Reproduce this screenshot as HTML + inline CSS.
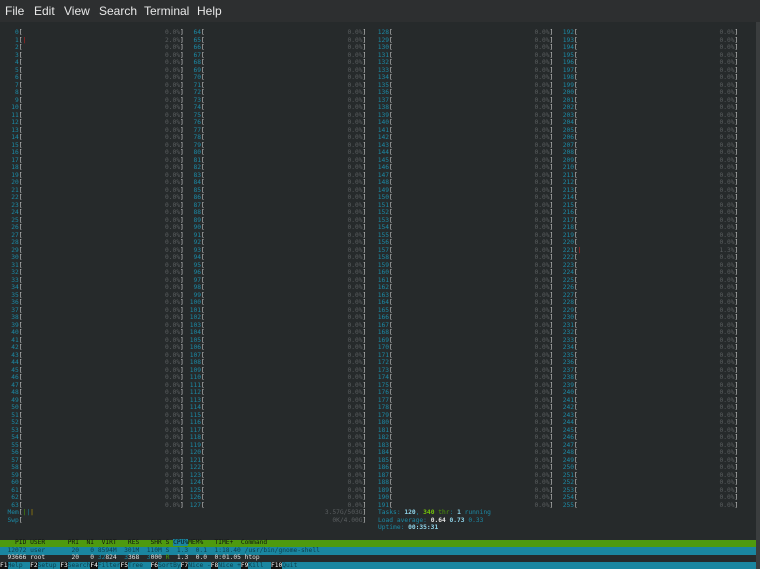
<!DOCTYPE html>
<html style="overflow:hidden;height:569px"><head><meta charset="utf-8"><style>
body{margin:0;width:760px;height:569px;overflow:hidden;background:#262a2b;font-family:"Liberation Mono",monospace;position:relative}
#menu{position:absolute;left:0;top:0;width:760px;height:22px;background:#2d2f30;font-family:"Liberation Sans",sans-serif;font-size:12px;color:#e8e8e8}
#menu span{position:absolute;top:4px}
.p{position:absolute;white-space:pre;font-size:6.25px;line-height:7.5px;margin:0}
.lab{color:#1b8aa6;text-align:right}
.br{color:#d0d0d0}
.pc{color:#5a5e60;text-align:right}
#sb{position:absolute;left:756px;top:22px;width:4px;height:547px;background:#3a3d3e}
.bar{position:absolute;left:0;width:756px;height:7.5px}
</style></head><body>
<div id="menu"><span style="left:5px">File</span><span style="left:34px">Edit</span><span style="left:64px">View</span><span style="left:99px">Search</span><span style="left:144px">Terminal</span><span style="left:197px">Help</span></div>
<div id="sb"></div>

<pre class="p lab" style="left:0;top:29px;width:18.75px">0
1
2
3
4
5
6
7
8
9
10
11
12
13
14
15
16
17
18
19
20
21
22
23
24
25
26
27
28
29
30
31
32
33
34
35
36
37
38
39
40
41
42
43
44
45
46
47
48
49
50
51
52
53
54
55
56
57
58
59
60
61
62
63</pre>
<pre class="p lab" style="left:180px;top:29px;width:21px">64
65
66
67
68
69
70
71
72
73
74
75
76
77
78
79
80
81
82
83
84
85
86
87
88
89
90
91
92
93
94
95
96
97
98
99
100
101
102
103
104
105
106
107
108
109
110
111
112
113
114
115
116
117
118
119
120
121
122
123
124
125
126
127</pre>
<pre class="p lab" style="left:360px;top:29px;width:29px">128
129
130
131
132
133
134
135
136
137
138
139
140
141
142
143
144
145
146
147
148
149
150
151
152
153
154
155
156
157
158
159
160
161
162
163
164
165
166
167
168
169
170
171
172
173
174
175
176
177
178
179
180
181
182
183
184
185
186
187
188
189
190
191</pre>
<pre class="p lab" style="left:545px;top:29px;width:29px">192
193
194
195
196
197
198
199
200
201
202
203
204
205
206
207
208
209
210
211
212
213
214
215
216
217
218
219
220
221
222
223
224
225
226
227
228
229
230
231
232
233
234
235
236
237
238
239
240
241
242
243
244
245
246
247
248
249
250
251
252
253
254
255</pre>

<pre class="p br" style="left:18.75px;top:29px">[
[<span style="color:#cc2020">|</span>
[
[
[
[
[
[
[
[
[
[
[
[
[
[
[
[
[
[
[
[
[
[
[
[
[
[
[
[
[
[
[
[
[
[
[
[
[
[
[
[
[
[
[
[
[
[
[
[
[
[
[
[
[
[
[
[
[
[
[
[
[
[</pre>
<pre class="p br" style="left:201px;top:29px">[
[
[
[
[
[
[
[
[
[
[
[
[
[
[
[
[
[
[
[
[
[
[
[
[
[
[
[
[
[
[
[
[
[
[
[
[
[
[
[
[
[
[
[
[
[
[
[
[
[
[
[
[
[
[
[
[
[
[
[
[
[
[
[</pre>
<pre class="p br" style="left:389px;top:29px">[
[
[
[
[
[
[
[
[
[
[
[
[
[
[
[
[
[
[
[
[
[
[
[
[
[
[
[
[
[
[
[
[
[
[
[
[
[
[
[
[
[
[
[
[
[
[
[
[
[
[
[
[
[
[
[
[
[
[
[
[
[
[
[</pre>
<pre class="p br" style="left:574px;top:29px">[
[
[
[
[
[
[
[
[
[
[
[
[
[
[
[
[
[
[
[
[
[
[
[
[
[
[
[
[
[<span style="color:#cc2020">|</span>
[
[
[
[
[
[
[
[
[
[
[
[
[
[
[
[
[
[
[
[
[
[
[
[
[
[
[
[
[
[
[
[
[
[</pre>

<pre class="p pc" style="left:140px;top:29px;width:40px">0.0%
2.0%
0.0%
0.0%
0.0%
0.0%
0.0%
0.0%
0.0%
0.0%
0.0%
0.0%
0.0%
0.0%
0.0%
0.0%
0.0%
0.0%
0.0%
0.0%
0.0%
0.0%
0.0%
0.0%
0.0%
0.0%
0.0%
0.0%
0.0%
0.0%
0.0%
0.0%
0.0%
0.0%
0.0%
0.0%
0.0%
0.0%
0.0%
0.0%
0.0%
0.0%
0.0%
0.0%
0.0%
0.0%
0.0%
0.0%
0.0%
0.0%
0.0%
0.0%
0.0%
0.0%
0.0%
0.0%
0.0%
0.0%
0.0%
0.0%
0.0%
0.0%
0.0%
0.0%</pre>
<pre class="p pc" style="left:322.5px;top:29px;width:40px">0.0%
0.0%
0.0%
0.0%
0.0%
0.0%
0.0%
0.0%
0.0%
0.0%
0.0%
0.0%
0.0%
0.0%
0.0%
0.0%
0.0%
0.0%
0.0%
0.0%
0.0%
0.0%
0.0%
0.0%
0.0%
0.0%
0.0%
0.0%
0.0%
0.0%
0.0%
0.0%
0.0%
0.0%
0.0%
0.0%
0.0%
0.0%
0.0%
0.0%
0.0%
0.0%
0.0%
0.0%
0.0%
0.0%
0.0%
0.0%
0.0%
0.0%
0.0%
0.0%
0.0%
0.0%
0.0%
0.0%
0.0%
0.0%
0.0%
0.0%
0.0%
0.0%
0.0%
0.0%
3.57G/503G
0K/4.00G</pre>
<pre class="p pc" style="left:509.5px;top:29px;width:40px">0.0%
0.0%
0.0%
0.0%
0.0%
0.0%
0.0%
0.0%
0.0%
0.0%
0.0%
0.0%
0.0%
0.0%
0.0%
0.0%
0.0%
0.0%
0.0%
0.0%
0.0%
0.0%
0.0%
0.0%
0.0%
0.0%
0.0%
0.0%
0.0%
0.0%
0.0%
0.0%
0.0%
0.0%
0.0%
0.0%
0.0%
0.0%
0.0%
0.0%
0.0%
0.0%
0.0%
0.0%
0.0%
0.0%
0.0%
0.0%
0.0%
0.0%
0.0%
0.0%
0.0%
0.0%
0.0%
0.0%
0.0%
0.0%
0.0%
0.0%
0.0%
0.0%
0.0%
0.0%</pre>
<pre class="p pc" style="left:694.5px;top:29px;width:40px">0.0%
0.0%
0.0%
0.0%
0.0%
0.0%
0.0%
0.0%
0.0%
0.0%
0.0%
0.0%
0.0%
0.0%
0.0%
0.0%
0.0%
0.0%
0.0%
0.0%
0.0%
0.0%
0.0%
0.0%
0.0%
0.0%
0.0%
0.0%
0.0%
1.3%
0.0%
0.0%
0.0%
0.0%
0.0%
0.0%
0.0%
0.0%
0.0%
0.0%
0.0%
0.0%
0.0%
0.0%
0.0%
0.0%
0.0%
0.0%
0.0%
0.0%
0.0%
0.0%
0.0%
0.0%
0.0%
0.0%
0.0%
0.0%
0.0%
0.0%
0.0%
0.0%
0.0%
0.0%</pre>
<pre class="p br" style="left:180px;top:29px">]
]
]
]
]
]
]
]
]
]
]
]
]
]
]
]
]
]
]
]
]
]
]
]
]
]
]
]
]
]
]
]
]
]
]
]
]
]
]
]
]
]
]
]
]
]
]
]
]
]
]
]
]
]
]
]
]
]
]
]
]
]
]
]</pre>
<pre class="p br" style="left:362.5px;top:29px">]
]
]
]
]
]
]
]
]
]
]
]
]
]
]
]
]
]
]
]
]
]
]
]
]
]
]
]
]
]
]
]
]
]
]
]
]
]
]
]
]
]
]
]
]
]
]
]
]
]
]
]
]
]
]
]
]
]
]
]
]
]
]
]
]
]</pre>
<pre class="p br" style="left:549.5px;top:29px">]
]
]
]
]
]
]
]
]
]
]
]
]
]
]
]
]
]
]
]
]
]
]
]
]
]
]
]
]
]
]
]
]
]
]
]
]
]
]
]
]
]
]
]
]
]
]
]
]
]
]
]
]
]
]
]
]
]
]
]
]
]
]
]</pre>
<pre class="p br" style="left:734.5px;top:29px">]
]
]
]
]
]
]
]
]
]
]
]
]
]
]
]
]
]
]
]
]
]
]
]
]
]
]
]
]
]
]
]
]
]
]
]
]
]
]
]
]
]
]
]
]
]
]
]
]
]
]
]
]
]
]
]
]
]
]
]
]
]
]
]</pre>

<pre class="p" style="left:7.5px;top:509px"><span style="color:#1b8aa6">Mem</span><span class="br">[</span><span style="color:#4e9a06">|</span><span style="color:#1b8aa6">|</span><span style="color:#c4a000">|</span>
<span style="color:#1b8aa6">Swp</span><span class="br">[</span></pre>

<pre class="p" style="left:378px;top:509px;color:#1b8aa6">Tasks: <span style="color:#8fd3e8;font-weight:bold">120</span>, <span style="color:#73c20a;font-weight:bold">340</span><span style="color:#4e9a06"> thr</span>: <span style="color:#8fd3e8;font-weight:bold">1</span> running
Load average: <span style="color:#e0e0e0;font-weight:bold">0.64</span> <span style="color:#8fd3e8;font-weight:bold">0.73</span> 0.33
Uptime: <span style="color:#8fd3e8;font-weight:bold">00:35:31</span></pre>

<div class="bar" style="top:539.5px;background:#4e9a0f"></div>
<div class="bar" style="top:547px;background:#1a86a0"></div>
<div class="bar" style="top:562px;background:#1a86a0;height:7px"></div>

<pre class="p" style="left:0;top:539px;color:#111">    PID USER      PRI  NI  VIRT   RES   SHR S <span style="background:#1a86a0">CPU%</span>MEM%   TIME+  Command</pre>
<pre class="p" style="left:0;top:546.5px;color:#0c3d4c">  12072 user       20   0 8594M  301M  110M S  1.3  0.1  1:18.40 /usr/bin/gnome-shell</pre>
<pre class="p" style="left:0;top:554px;color:#e0e0e0">  93666 root       20   0 <span style="color:#1b8aa6">32</span>824  <span style="color:#1b8aa6">3</span>368  <span style="color:#1b8aa6">3</span>000 <span style="color:#4e9a06">R</span>  1.3  0.0  0:01.05 htop</pre>
<pre class="p" style="left:0;top:561.5px;color:#0c3d4c"><span style="color:#fff;background:#111">F1</span>Help  <span style="color:#fff;background:#111">F2</span>Setup <span style="color:#fff;background:#111">F3</span>Search<span style="color:#fff;background:#111">F4</span>Filter<span style="color:#fff;background:#111">F5</span>Tree  <span style="color:#fff;background:#111">F6</span>SortBy<span style="color:#fff;background:#111">F7</span>Nice -<span style="color:#fff;background:#111">F8</span>Nice +<span style="color:#fff;background:#111">F9</span>Kill  <span style="color:#fff;background:#111">F10</span>Quit</pre>
</body></html>
